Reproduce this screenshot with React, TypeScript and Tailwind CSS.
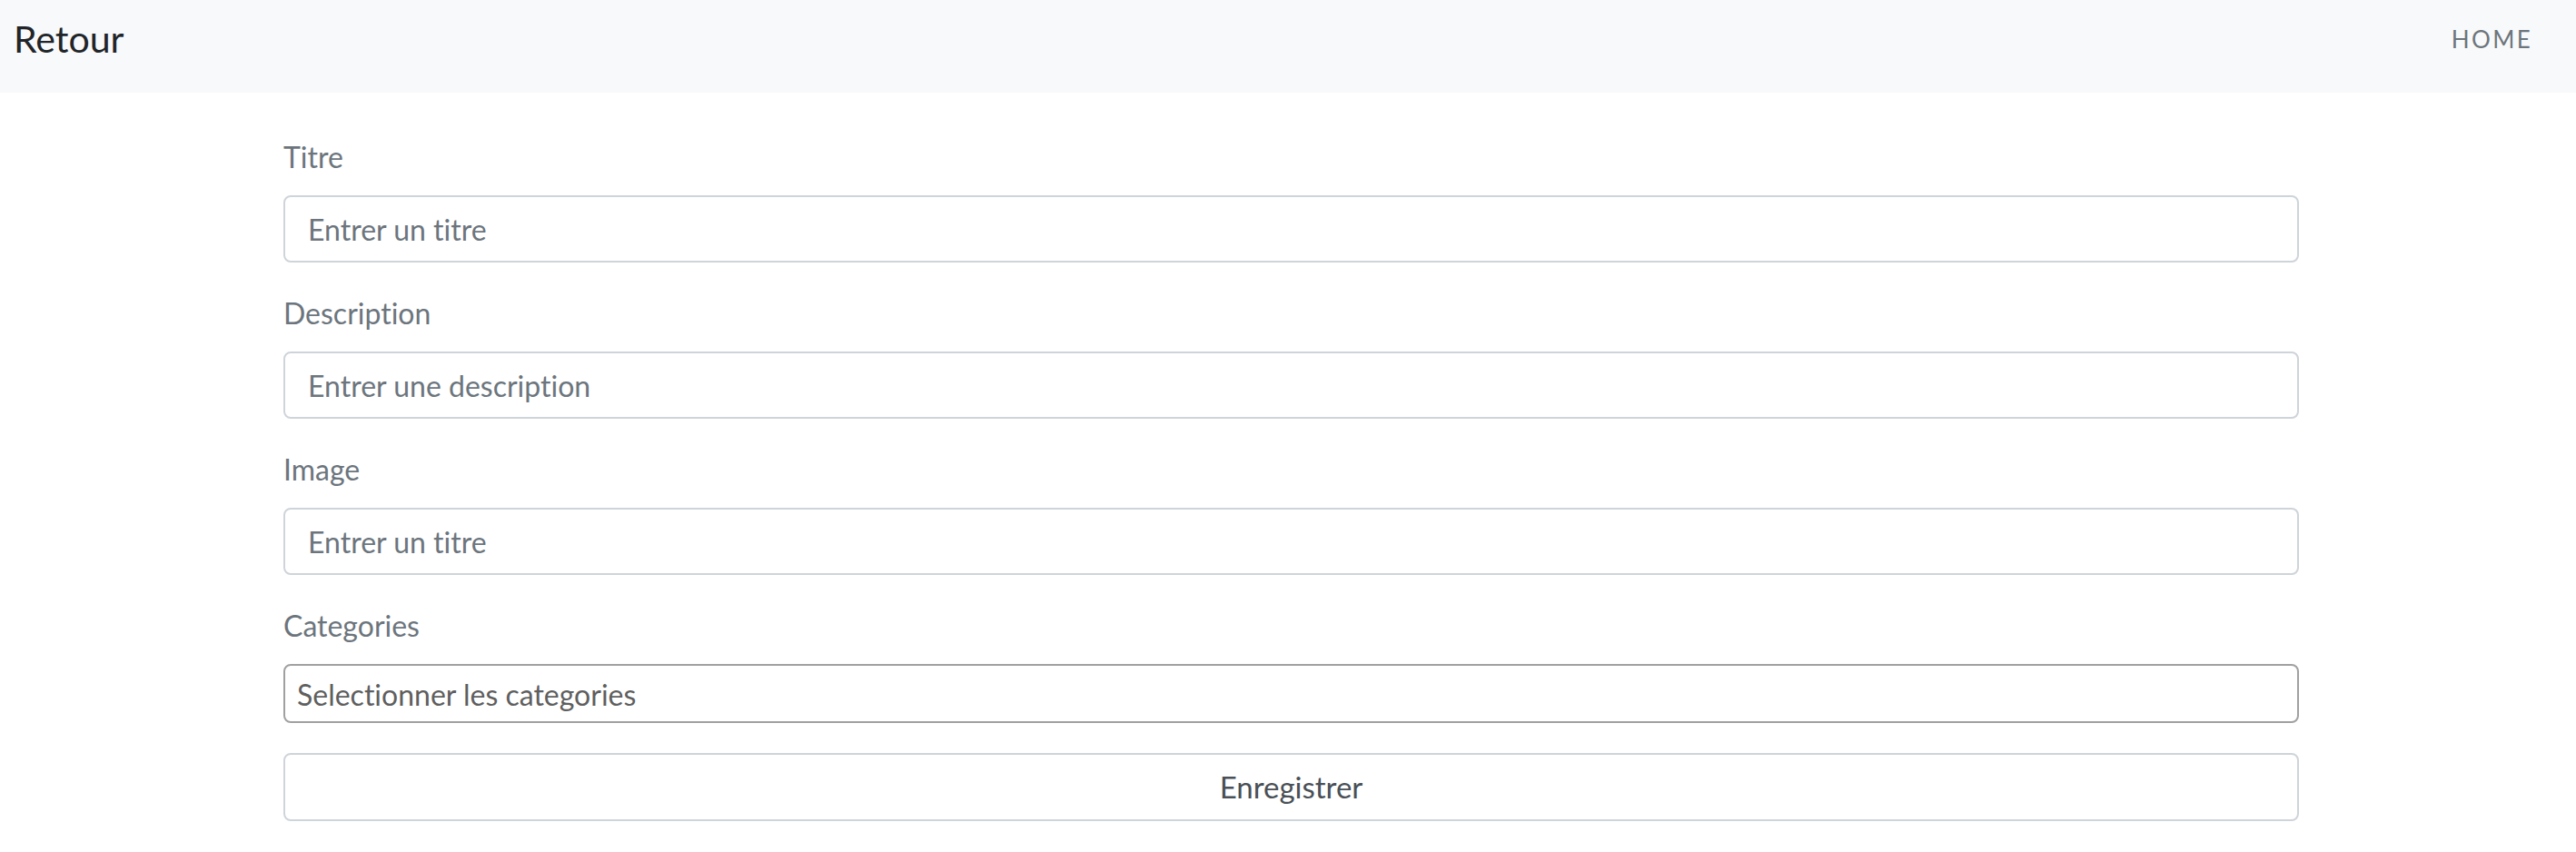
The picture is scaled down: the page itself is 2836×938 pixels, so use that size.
import React from "react";

const font = { fontFamily: '"Lato", "Open Sans", sans-serif', fontVariantLigatures: "none" as const };

function Field({ label, placeholder }: { label: string; placeholder: string }) {
  return (
    <div className="mb-[30px]">
      <label className="block h-[52px] leading-[52px] text-[32px] text-[#6c757d] mb-[16px]">{label}</label>
      <input
        className="block w-full h-[74px] border-2 border-[#ced4da] rounded-[8px] px-[25px] text-[32px] text-[#495057] placeholder:text-[#6c757d] bg-white outline-none"
        placeholder={placeholder}
        style={font}
      />
    </div>
  );
}

export default function App() {
  return (
    <div className="min-h-[938px] bg-white" style={font}>
      <nav className="h-[102px] bg-[#f8f9fa] flex items-start justify-between pl-[15px] pr-[48px]">
        <span className="mt-[22px] text-[41px] text-[#212529] leading-none">Retour</span>
        <span className="mt-[30px] text-[26px] tracking-[0.09em] text-[#6c757d] leading-none">HOME</span>
      </nav>
      <div className="w-[2219px] ml-[312px] pt-[45px]">
        <Field label="Titre" placeholder="Entrer un titre" />
        <Field label="Description" placeholder="Entrer une description" />
        <Field label="Image" placeholder="Entrer un titre" />
        <div className="mb-[33px]">
          <label className="block h-[52px] leading-[52px] text-[32px] text-[#6c757d] mb-[16px]">Categories</label>
          <div className="w-full h-[65px] border-2 border-[#a0a0a0] rounded-[8px] pl-[13px] pt-[3px] flex items-center text-[32px] text-[#5f5f5f]">
            Selectionner les categories
          </div>
        </div>
        <button
          className="block w-full h-[75px] border-2 border-[#ced4da] rounded-[8px] bg-white text-[33px] text-[#495057]"
          style={font}
        >
          Enregistrer
        </button>
      </div>
    </div>
  );
}
